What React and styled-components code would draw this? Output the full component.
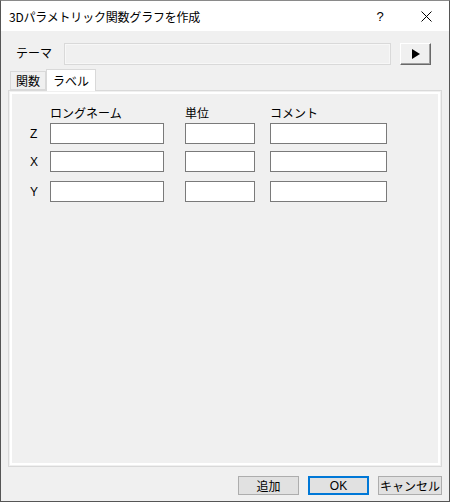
import React from "react";
import styled, { createGlobalStyle } from "styled-components";

const GlobalStyle = createGlobalStyle`
  html, body {
    margin: 0;
    padding: 0;
    background: #f0f0f0;
  }
  * {
    box-sizing: border-box;
  }
`;

const Window = styled.div`
  width: 450px;
  height: 502px;
  display: flex;
  flex-direction: column;
  background: #f0f0f0;
  border: 1px solid #555;
  border-top-color: #8a8a8a;
  font-family: "Noto Sans CJK JP", "Liberation Sans", sans-serif;
  font-size: 12px;
  color: #000;
  overflow: hidden;
`;

const TitleBar = styled.div`
  height: 30px;
  flex: none;
  background: #fff;
  display: flex;
  align-items: center;
  padding-left: 8px;
`;

const Title = styled.div`
  flex: 1;
  font-size: 12px;
  letter-spacing: -0.2px;
`;

const TitleButton = styled.div`
  width: 46px;
  height: 30px;
  display: flex;
  align-items: center;
  justify-content: center;
  font-family: "Liberation Sans", sans-serif;
  font-size: 13px;
`;

const Body = styled.div`
  flex: 1;
  display: flex;
  flex-direction: column;
  padding: 12px 7px 7px 7px;
`;

const ThemeRow = styled.div`
  display: flex;
  align-items: center;
  height: 22px;
  padding-left: 8px;
`;

const ThemeLabel = styled.div`
  width: 48px;
  margin-top: -3px;
`;

const ThemeField = styled.div`
  width: 327px;
  height: 22px;
  border: 1px solid #d9d9d9;
  box-shadow: inset 0 0 0 1px #f7f7f7;
  background: #f0f0f0;
`;

const PlayButton = styled.div`
  margin-left: 9px;
  width: 31px;
  height: 22px;
  background: #f0f0f0;
  border: 1px solid #fff;
  border-right-color: #696969;
  border-bottom-color: #696969;
  box-shadow: inset -1px -1px 0 #a0a0a0;
  display: flex;
  align-items: center;
  justify-content: center;
`;

const TabStrip = styled.div`
  display: flex;
  align-items: flex-end;
  height: 21px;
  margin-top: 4px;
  padding-left: 2px;
  position: relative;
  z-index: 1;
`;

const Tab = styled.div`
  height: ${(p) => (p.$active ? 22 : 19)}px;
  padding: 0 ${(p) => (p.$active ? 6 : 5)}px;
  margin-bottom: ${(p) => (p.$active ? -1 : 0)}px;
  background: ${(p) => (p.$active ? "#fff" : "#f0f0f0")};
  border: 1px solid #d9d9d9;
  border-bottom: ${(p) => (p.$active ? "none" : "1px solid #d9d9d9")};
  display: flex;
  align-items: center;
  line-height: 1;
`;

const Panel = styled.div`
  flex: 1;
  border: 1px solid #d9d9d9;
  box-shadow: inset 0 0 0 1px #f0f0f0, inset 0 0 0 3px #fff;
  background: #f0f0f0;
  padding: 8px 0 0 20px;
`;

const Row = styled.div`
  display: grid;
  grid-template-columns: 21px 135px 85px 117px;
  align-items: center;
  margin-top: ${(p) => p.$top}px;
`;

const Head = styled.div`
  height: 20px;
  line-height: 20px;
`;

const AxisLabel = styled.div`
  padding-left: 1px;
  font-family: "Liberation Sans", sans-serif;
  font-size: 12px;
`;

const TextBox = styled.div`
  width: ${(p) => p.$w}px;
  height: 21px;
  background: #fff;
  border: 1px solid #7a7a7a;
`;

const Footer = styled.div`
  display: flex;
  justify-content: flex-end;
  gap: 9px;
  padding: 9px 0 0 0;
  height: 27px;
`;

const Button = styled.div`
  width: ${(p) => p.$w}px;
  height: 19px;
  background: #e1e1e1;
  border: ${(p) => (p.$default ? "2px solid #0078d7" : "1px solid #adadad")};
  display: flex;
  align-items: center;
  justify-content: center;
  line-height: 1;
  font-family: ${(p) => (p.$latin ? '"Liberation Sans", sans-serif' : "inherit")};
`;

const rows = [
  { axis: "Z", top: 0 },
  { axis: "X", top: 7 },
  { axis: "Y", top: 9 },
];

export default function App() {
  return (
    <>
      <GlobalStyle />
      <Window>
        <TitleBar>
          <Title>3Dパラメトリック関数グラフを作成</Title>
          <TitleButton>?</TitleButton>
          <TitleButton>
            <svg width="11" height="11" viewBox="0 0 11 11">
              <path d="M0.5 0.5 L10.5 10.5 M10.5 0.5 L0.5 10.5" stroke="#000" strokeWidth="1" />
            </svg>
          </TitleButton>
        </TitleBar>
        <Body>
          <ThemeRow>
            <ThemeLabel>テーマ</ThemeLabel>
            <ThemeField />
            <PlayButton>
              <svg width="8" height="10" viewBox="0 0 8 10">
                <polygon points="0,0 8,5 0,10" fill="#000" />
              </svg>
            </PlayButton>
          </ThemeRow>
          <TabStrip>
            <Tab>関数</Tab>
            <Tab $active>ラベル</Tab>
          </TabStrip>
          <Panel>
            <Row $top={4}>
              <span />
              <Head>ロングネーム</Head>
              <Head>単位</Head>
              <Head>コメント</Head>
            </Row>
            {rows.map((r) => (
              <Row key={r.axis} $top={r.top}>
                <AxisLabel>{r.axis}</AxisLabel>
                <TextBox $w={114} />
                <TextBox $w={70} />
                <TextBox $w={117} />
              </Row>
            ))}
          </Panel>
          <Footer>
            <Button $w={61}>追加</Button>
            <Button $w={61} $default $latin>OK</Button>
            <Button $w={64}>キャンセル</Button>
          </Footer>
        </Body>
      </Window>
    </>
  );
}
